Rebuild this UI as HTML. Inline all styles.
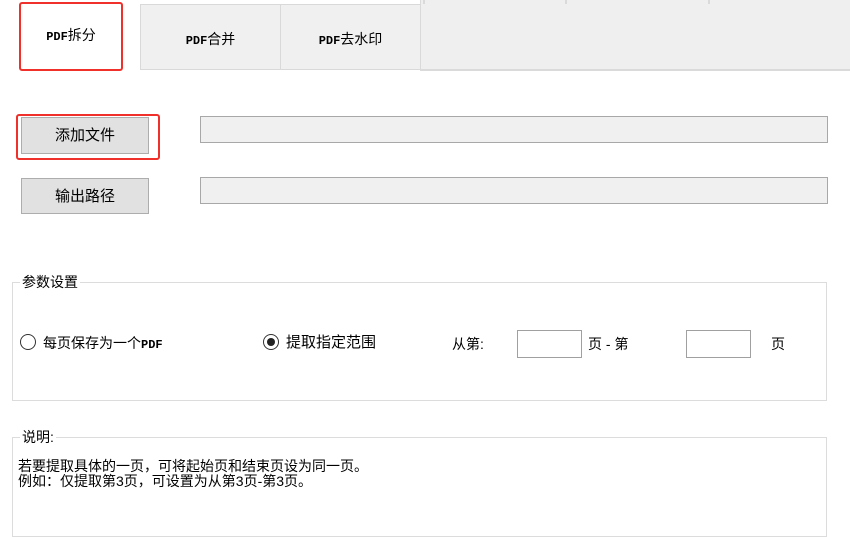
<!DOCTYPE html><html><head><meta charset="utf-8"><style>
body{margin:0;width:850px;height:515px;background:#fff;position:relative;overflow:hidden;font-family:"Liberation Sans","Noto Sans CJK SC",sans-serif;font-size:14px;color:#000}
.a{position:absolute}
.mono{font-family:"Liberation Mono","Noto Sans CJK SC",monospace;font-size:13px}
.m{font-family:"Liberation Mono",monospace;font-weight:bold;font-size:12px}
.tab{background:#f0f0f0;border:1px solid #d9d9d9;box-sizing:border-box;text-align:center}
.btn{background:#e1e1e1;border:1px solid #adadad;box-sizing:border-box;text-align:center;line-height:36px;font-size:15px}
.tb{background:#f0f0f0;border:1px solid #a8a8a8;box-sizing:border-box}
.grp{border:1px solid #dcdcdc;box-sizing:border-box}
.lbl{background:#fff;padding:0 2px}
.in{background:#fff;border:1px solid #a0a0a0;box-sizing:border-box}
</style></head><body>
<div class="a" style="left:420px;top:0;width:430px;height:71px;background:#efefef;border-left:1px solid #dadada;border-bottom:2px solid #dadada;box-sizing:border-box"></div>
<div class="a" style="left:423px;top:0;width:2px;height:4px;background:#dadada"></div>
<div class="a" style="left:565px;top:0;width:2px;height:4px;background:#dadada"></div>
<div class="a" style="left:708px;top:0;width:2px;height:4px;background:#dadada"></div>
<div class="a tab" style="left:140px;top:4px;width:141px;height:66px;line-height:68px"><span class="m">PDF</span>合并</div>
<div class="a tab" style="left:280px;top:4px;width:141px;height:66px;line-height:68px"><span class="m">PDF</span>去水印</div>
<div class="a" style="left:20px;top:0;width:102px;height:70px;line-height:70px;text-align:center;background:#fff"><span class="m">PDF</span>拆分</div>
<div class="a" style="left:19px;top:2px;width:104px;height:69px;border:2px solid #f0302a;border-radius:3px;box-sizing:border-box"></div>
<div class="a btn" style="left:21px;top:117px;width:128px;height:37px">添加文件</div>
<div class="a" style="left:16px;top:114px;width:144px;height:46px;border:2px solid #f0302a;border-radius:3px;box-sizing:border-box"></div>
<div class="a btn" style="left:21px;top:178px;width:128px;height:36px">输出路径</div>
<div class="a tb" style="left:200px;top:116px;width:628px;height:27px"></div>
<div class="a tb" style="left:200px;top:177px;width:628px;height:27px"></div>
<div class="a grp" style="left:12px;top:282px;width:815px;height:119px"></div>
<div class="a lbl" style="left:20px;top:272px;line-height:20px">参数设置</div>
<div class="a" style="left:20px;top:334px;width:14px;height:14px;border:1px solid #333;border-radius:50%;background:#fff"></div>
<div class="a" style="left:43px;top:333px;line-height:20px">每页保存为一个<span class="m">PDF</span></div>
<div class="a" style="left:263px;top:334px;width:14px;height:14px;border:1px solid #333;border-radius:50%;background:#fff"></div>
<div class="a" style="left:267px;top:338px;width:8px;height:8px;border-radius:50%;background:#222"></div>
<div class="a" style="left:286px;top:333px;line-height:20px;font-size:15px">提取指定范围</div>
<div class="a" style="left:452px;top:334px;line-height:20px">从第:</div>
<div class="a in" style="left:517px;top:330px;width:65px;height:28px"></div>
<div class="a" style="left:588px;top:334px;line-height:20px">页 - 第</div>
<div class="a in" style="left:686px;top:330px;width:65px;height:28px"></div>
<div class="a" style="left:771px;top:334px;line-height:20px">页</div>
<div class="a grp" style="left:12px;top:437px;width:815px;height:100px"></div>
<div class="a lbl" style="left:20px;top:427px;line-height:20px">说明:</div>
<div class="a" style="left:18px;top:459px;line-height:15px;font-size:14px">若要提取具体的一页，可将起始页和结束页设为同一页。<br>例如：仅提取第3页，可设置为从第3页-第3页。</div>
</body></html>
